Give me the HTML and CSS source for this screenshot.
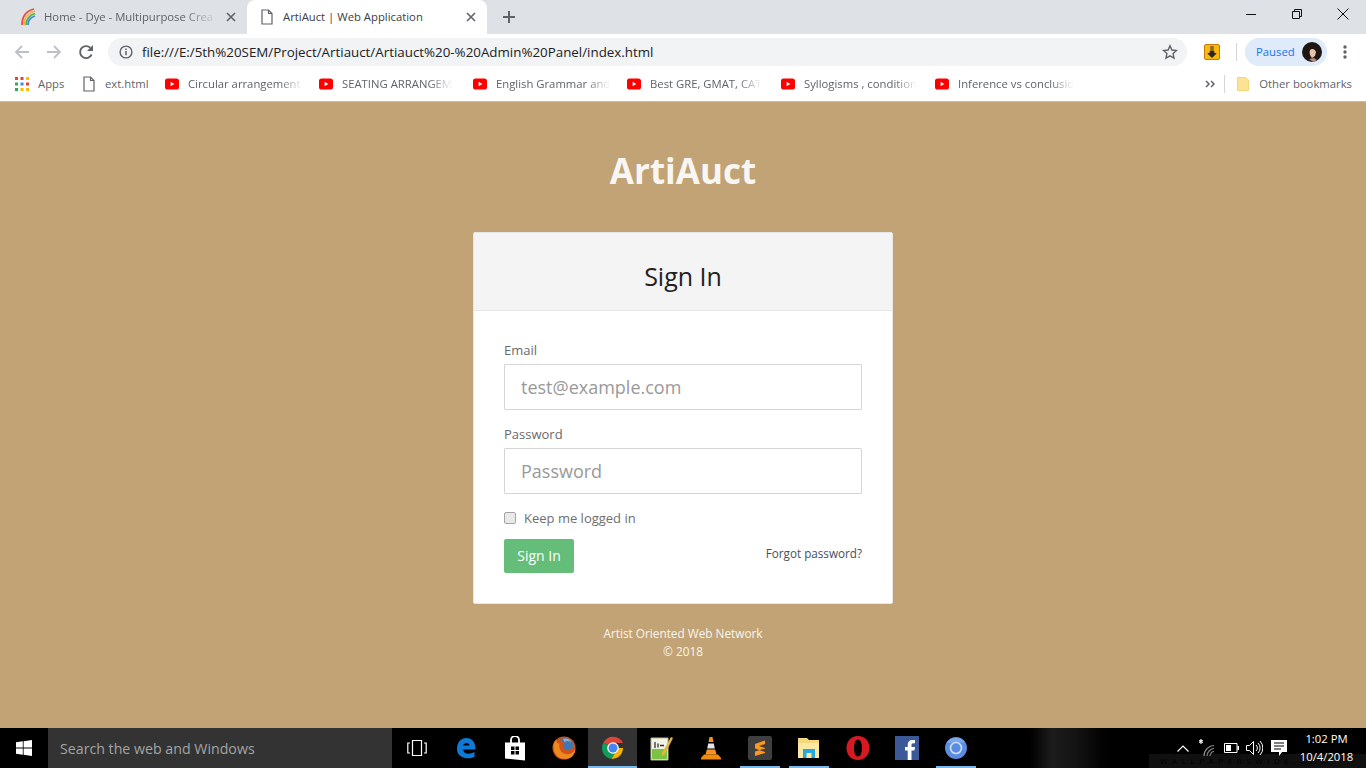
FILE: index.html
```html
<!DOCTYPE html>
<html lang="en">
<head>
<meta charset="utf-8">
<title>ArtiAuct | Web Application</title>
<link rel="stylesheet" href="styles.css">
</head>
<body>
<svg class="defs" width="0" height="0">
  <symbol id="yt" viewBox="0 0 14 12"><rect width="14" height="11" y=".5" rx="2.6" fill="#f00"/><path d="M5.6 3.7v4.6L9.4 6z" fill="#fff"/></symbol>
  <symbol id="doc" viewBox="0 0 12 16"><path d="M1 1h6.5L11 4.5V15H1zM7.5 1v3.5H11" fill="#fff" stroke="#5f6368" stroke-width="1.2"/></symbol>
  <symbol id="x" viewBox="0 0 10 10"><path d="M1 1l8 8M9 1l-8 8" stroke="#5f6368" stroke-width="1.6" fill="none"/></symbol>
</svg>
<header class="chrome">
  <div class="tabstrip">
    <div class="tab">
      <svg class="favicon" width="16" height="18" viewBox="0 0 16 18" fill="none" stroke-width="1.7"><path d="M2 17C2 9 6 3 14 1" stroke="#e8483b"/><path d="M4 17C4 10 8 5 15 3" stroke="#f4b23c"/><path d="M6 17C6 12 9 7 15 5.500" stroke="#4caf50"/><path d="M8 17C8 13 10 9.500 15 8" stroke="#3f8ad8"/></svg>
      <span class="tab-title fade">Home - Dye - Multipurpose Crea</span>
      <svg class="tab-x" width="10" height="10"><use href="#x"/></svg>
    </div>
    <div class="tab active">
      <svg class="doc-ic" width="12" height="16"><use href="#doc"/></svg>
      <span class="tab-title">ArtiAuct | Web Application</span>
      <svg class="tab-x" width="10" height="10"><use href="#x"/></svg>
    </div>
    <svg class="newtab" width="14" height="14" viewBox="0 0 14 14"><path d="M7 1v12M1 7h12" stroke="#5f6368" stroke-width="2"/></svg>
    <div class="winctl">
      <span class="winbtn"><svg width="12" height="12" viewBox="0 0 12 12"><path d="M1 6.500h10" stroke="#111"/></svg></span>
      <span class="winbtn"><svg width="12" height="12" viewBox="0 0 12 12" fill="none" stroke="#111"><path d="M1.500 3.500h7v7h-7zM3.500 3.500v-2h7v7h-2"/></svg></span>
      <span class="winbtn"><svg width="12" height="12" viewBox="0 0 12 12"><path d="M.5.500l11 11M11.500.500l-11 11" stroke="#111"/></svg></span>
    </div>
  </div>
  <div class="toolbar">
    <svg class="nav" width="16" height="16" viewBox="0 0 16 16" fill="none" stroke="#bdc1c6" stroke-width="1.8"><path d="M15 8H2M8 2L2 8l6 6"/></svg>
    <svg class="nav" width="16" height="16" viewBox="0 0 16 16" fill="none" stroke="#bdc1c6" stroke-width="1.8"><path d="M1 8h13M8 2l6 6-6 6"/></svg>
    <svg class="nav" width="16" height="16" viewBox="0 0 16 16" fill="none"><path d="M13.600 10.500A6 6 0 1 1 12.300 3.800" stroke="#5f6368" stroke-width="1.900"/><path d="M15 1v6H9z" fill="#5f6368"/></svg>
    <div class="omnibox">
      <svg width="14" height="14" viewBox="0 0 14 14" fill="none"><circle cx="7" cy="7" r="5.900" stroke="#5f6368" stroke-width="1.400"/><path d="M7 6v4.200M7 3.600v1.400" stroke="#5f6368" stroke-width="1.500"/></svg>
      <span class="url">file:///E:/5th%20SEM/Project/Artiauct/Artiauct%20-%20Admin%20Panel/index.html</span>
      <svg class="star" width="16" height="16" viewBox="0 0 16 16"><path d="M8 1.800l1.900 4.200 4.600.500-3.400 3.100.9 4.500L8 11.800l-4 2.300.9-4.500L1.500 6.500 6.100 6z" fill="none" stroke="#5f6368" stroke-width="1.400"/></svg>
    </div>
    <svg class="ext" width="16" height="16" viewBox="0 0 16 16"><rect x=".5" y=".5" width="15" height="15" rx="1.500" fill="#fbb80f" stroke="#c77a08"/><path d="M6.200 3h3.600M6.200 5h3.600M6.200 7h3.600V9.500H12L8 13.500 4 9.500h2.200z" fill="#262626" stroke="#262626"/></svg>
    <span class="vsep"></span>
    <div class="paused">
      <span>Paused</span>
      <svg width="20" height="20" viewBox="0 0 20 20"><circle cx="10" cy="10" r="10" fill="#1d1613"/><path d="M8 8c2-2 5-1 6 2l-1 4-3 2c-2-2-3-5-2-8z" fill="#e8c3ac"/><path d="M7 17l5-1 3 2-4 2z" fill="#b78a75"/></svg>
    </div>
    <svg class="menu" width="4" height="16" viewBox="0 0 4 16"><circle cx="2" cy="3" r="1.700" fill="#5f6368"/><circle cx="2" cy="8" r="1.700" fill="#5f6368"/><circle cx="2" cy="13" r="1.700" fill="#5f6368"/></svg>
  </div>
  <div class="bookmarks">
    <div class="bm bm-apps">
      <svg width="14" height="14" viewBox="0 0 14 14">
        <g fill="#ea4335"><rect x="0" y="0" width="3" height="3"/><rect x="5.500" y="0" width="3" height="3"/></g><rect x="11" y="0" width="3" height="3" fill="#fbbc05"/>
        <rect x="0" y="5.500" width="3" height="3" fill="#34a853"/><rect x="5.500" y="5.500" width="3" height="3" fill="#4285f4"/><rect x="11" y="5.500" width="3" height="3" fill="#ea4335"/>
        <rect x="0" y="11" width="3" height="3" fill="#34a853"/><rect x="5.500" y="11" width="3" height="3" fill="#fbbc05"/><rect x="11" y="11" width="3" height="3" fill="#fbbc05"/>
      </svg>
      <span>Apps</span>
    </div>
    <div class="bm bm-ext"><svg width="12" height="16"><use href="#doc"/></svg><span>ext.html</span></div>
    <div class="bm bm-yt"><svg width="14" height="12"><use href="#yt"/></svg><span class="fade">Circular arrangement,</span></div>
    <div class="bm bm-yt"><svg width="14" height="12"><use href="#yt"/></svg><span class="fade">SEATING ARRANGEM</span></div>
    <div class="bm bm-yt"><svg width="14" height="12"><use href="#yt"/></svg><span class="fade">English Grammar and</span></div>
    <div class="bm bm-yt"><svg width="14" height="12"><use href="#yt"/></svg><span class="fade">Best GRE, GMAT, CAT</span></div>
    <div class="bm bm-yt"><svg width="14" height="12"><use href="#yt"/></svg><span class="fade">Syllogisms , condition</span></div>
    <div class="bm bm-yt"><svg width="14" height="12"><use href="#yt"/></svg><span class="fade">Inference vs conclusio</span></div>
    <div class="bm-end">
      <svg width="10" height="8" viewBox="0 0 10 8" fill="none" stroke="#5f6368" stroke-width="1.500"><path d="M1 1l3 3-3 3M6 1l3 3-3 3"/></svg>
      <span class="vsep short"></span>
      <svg width="12" height="14" viewBox="0 0 12 14"><path d="M.5.500h8L11.500 3v10.500H.5z" fill="#fde293" stroke="#f4d47a"/></svg>
      <span>Other bookmarks</span>
    </div>
  </div>
</header>

<main class="page">
  <h1 class="brand">ArtiAuct</h1>
  <form class="card">
    <div class="card-head"><h2>Sign In</h2></div>
    <div class="card-body">
      <label class="field-label" for="email">Email</label>
      <input class="field" id="email" type="text" placeholder="test@example.com">
      <label class="field-label second" for="pass">Password</label>
      <input class="field" id="pass" type="password" placeholder="Password">
      <label class="keep"><span class="check"></span>Keep me logged in</label>
      <div class="actions">
        <span class="btn">Sign In</span>
        <span class="forgot">Forgot password?</span>
      </div>
    </div>
  </form>
  <p class="foot">Artist Oriented Web Network<br>© 2018</p>
</main>

<footer class="taskbar">
  <div class="start"><svg width="16" height="16" viewBox="0 0 16 16" fill="#fff"><path d="M0 2.300l6.800-1v6.300H0zM7.600 1.200L16 0v7.600H7.600zM0 8.400h6.800v6.300l-6.800-1zM7.600 8.400H16V16l-8.400-1.200z"/></svg></div>
  <div class="search">Search the web and Windows</div>
  <div class="slots">
    <span class="slot"><svg width="20" height="18" viewBox="0 0 20 18" fill="none" stroke="#fff" stroke-width="1.200"><path d="M5.500 1.500h9v15h-9zM3 4H.8v10H3M17 4h2.200v10H17"/></svg></span>
    <span class="slot"><svg width="20" height="22" viewBox="0 0 20 22"><path d="M1 12C1 5 5 1 10.500 1 16 1 19.500 5 19.500 12.500H7C7.500 17 13 18 18.500 15v5c-7 3-17.500 1-17.500-8zM7 8.500h6.500C13.500 5 8 5 7 8.500z" fill="#0c7ad6"/></svg></span>
    <span class="slot"><svg width="20" height="25" viewBox="0 0 20 25"><path d="M6 7V4a4 4 0 0 1 8 0v3" fill="none" stroke="#fff" stroke-width="1.800"/><path d="M0 6.500h20v18l-20-2z" fill="#fff"/><path d="M6 10.500h3.500v3.500H6zM10.500 10.500H14v3.500h-3.500zM6 15h3.500v3.500H6zM10.500 15H14v3.500h-3.500z" fill="#000"/></svg></span>
    <span class="slot"><svg width="24" height="24" viewBox="0 0 24 24"><circle cx="12" cy="12" r="11.500" fill="#d4511a"/><path d="M8 4c3-3 10-2 13 3 1 3 0 6-3 7-4 1-7-1-7-4 0-2 1-3 3-3-2-1-5-1-6-3z" fill="#3f78b5"/><path d="M11 3c3-1.500 7 0 8.500 3-2-1-5-1.500-7 0z" fill="#7fb4dd"/><path d="M2 7C0 14 4 23 13 23c6 0 10-4 10.500-10-2 4-6 6-10 5-5-1-7-6-6-11-2 1-3 0-3-3-1 0-2 2-2.500 3z" fill="#ee8a1d"/></svg></span>
    <span class="slot current"><svg width="24" height="24" viewBox="0 0 24 24"><path d="M12 12L2.500 6.500A11 11 0 0 1 22 7H12z" fill="#db4437"/><path d="M12 12l-9.500-5.500A11 11 0 0 0 10.500 23L15 15z" fill="#0f9d58"/><path d="M12 12h10a11 11 0 0 1-11.500 11L15 15z" fill="#f4b400"/><circle cx="12" cy="12" r="5.800" fill="#fff"/><circle cx="12" cy="12" r="4.500" fill="#4285f4"/></svg></span>
    <span class="slot"><svg width="24" height="26" viewBox="0 0 24 26"><path d="M1 3h17v22H1z" fill="#f2f2e6" stroke="#b6b69a"/><path d="M2 14h15v10H2z" fill="#7cc243"/><path d="M5 7v6M8 8.500v4M10 10.500h4" stroke="#333" stroke-width="1.300"/><path d="M12 18l9-16 2 1-8 16-3 2z" fill="#e5b63c"/></svg></span>
    <span class="slot"><svg width="22" height="24" viewBox="0 0 22 24"><path d="M9.500 1h3l1 5h-5z" fill="#f7931e"/><path d="M8.200 7.500h5.600l1 5H7.200z" fill="#e6e6e6"/><path d="M6.800 13.500h8.400l1.300 5h-11z" fill="#f7931e"/><path d="M1 22l3-3.500h14l3 3.500v1.500H1z" fill="#f28a12"/></svg></span>
    <span class="slot run"><svg width="24" height="24" viewBox="0 0 24 24"><rect width="24" height="24" rx="2" fill="#3f3f3f"/><path d="M17 4.500L7 8v4.500l10 3.500v-4L11 10l6-2zM7 15.500l10-3v4.500l-10 3z" fill="#fd971f"/></svg></span>
    <span class="slot run"><svg width="22" height="22" viewBox="0 0 22 22"><path d="M0 1h9l2 2h10v17H0z" fill="#f5d77d"/><path d="M0 6h21v15H0z" fill="#fbe6a2"/><path d="M5 12h12v9h-3.500v-5h-5v5H5z" fill="#23a9e0"/></svg></span>
    <span class="slot"><svg width="24" height="26" viewBox="0 0 24 26"><path fill-rule="evenodd" d="M12 1c7 0 11.500 5.500 11.500 12S19 25 12 25 .5 19.500.5 13 5 1 12 1zm0 3.500C9.500 4.500 8 8 8 13s1.500 8.500 4 8.500 4-3.500 4-8.500-1.500-8.500-4-8.500z" fill="#d81921"/></svg></span>
    <span class="slot"><svg width="24" height="24" viewBox="0 0 24 24"><rect width="24" height="24" fill="#3b5998"/><path d="M16.500 24v-9.500h3l.5-3.500h-3.500V9c0-1 .4-1.700 1.800-1.700H20V4.100C19.500 4 18.500 4 17.500 4c-3 0-4.800 1.800-4.800 4.700V11H10v3.500h2.700V24z" fill="#fff"/></svg></span>
    <span class="slot run"><svg width="24" height="24" viewBox="0 0 24 24"><circle cx="12" cy="12" r="11" fill="#5a8de0"/><path d="M2.500 7L12 6.500h9A11 11 0 0 0 2.500 7z" fill="#7ea7ea"/><circle cx="12" cy="12" r="5.500" fill="#5a8de0" stroke="#cfe0fb" stroke-width="1.600"/></svg></span>
  </div>
  <div class="tray">
    <svg class="t-caret" width="12" height="7" viewBox="0 0 12 7" fill="none" stroke="#fff" stroke-width="1.200"><path d="M.5 6.500L6 1l5.500 5.500"/></svg>
    <svg class="t-wifi" width="16" height="18" viewBox="0 0 16 18" fill="none" stroke="#8a8a8a" stroke-width="1.100"><path d="M15 6.500C10 6.500 5 11 5 17M15 9.500C12 9.500 8 13 8 17M15 12.500C13 12.500 11 14.500 11 17"/><path d="M2 0v5M0 1.500l4 2M4 1.500l-4 2" stroke="#fff"/></svg>
    <svg class="t-batt" width="15" height="10" viewBox="0 0 15 10"><path d="M.5.500h12.500v9H.5z" fill="none" stroke="#fff"/><rect x="2" y="2" width="5" height="6" fill="#fff"/><rect x="13.500" y="3" width="1.500" height="4" fill="#fff"/></svg>
    <svg class="t-vol" width="17" height="16" viewBox="0 0 17 16" fill="none" stroke="#fff"><path d="M.5 5.500h3l4-4v13l-4-4h-3z"/><path d="M10 5a4 4 0 0 1 0 6M12 3a7 7 0 0 1 0 10M14 1a10 10 0 0 1 0 14"/></svg>
    <svg class="t-note" width="16" height="16" viewBox="0 0 16 16"><path d="M0 0h16v12h-5l-3 4v-4H0z" fill="#fff"/><path d="M3 3h10M3 6h10M3 9h7" stroke="#000"/></svg>
    <div class="clock"><span>1:02 PM</span><span>10/4/2018</span></div>
  </div>
  <span class="wall-label">WALLPAPERSWIDE.COM</span>
</footer>
</body>
</html>
```

FILE: styles.css
```css
* { box-sizing: border-box; }
html, body { margin: 0; height: 100%; overflow: hidden; }
body { display: flex; flex-direction: column; height: 768px; font-family: "Open Sans", "Liberation Sans", sans-serif; background: #c1a375; }
.defs { display: block; height: 0; }
svg { display: block; flex: none; }

.chrome { flex: none; background: #fff; font-family: "Open Sans", sans-serif; }
.tabstrip { display: flex; align-items: center; height: 34px; background: #dee1e6; padding-left: 7px; }
.tab { display: flex; align-items: center; width: 240px; height: 34px; padding: 0 11px 0 13px; font-size: 11.3px; color: #5f6368; border-radius: 8px 8px 0 0; }
.tab.active { background: #fff; color: #3c4043; padding-left: 14px; }
.favicon { margin-right: 8px; }
.doc-ic { margin-right: 10px; }
.tab-title { flex: 1; margin-bottom: 2px; white-space: nowrap; }
.tab-x { margin-left: 8px; }
.newtab { margin-left: 15px; }
.winctl { display: flex; margin-left: auto; height: 34px; }
.winbtn { display: flex; align-items: center; justify-content: center; width: 46px; padding-bottom: 6px; }
.fade { white-space: nowrap; -webkit-mask-image: linear-gradient(to right, #000 80%, transparent); mask-image: linear-gradient(to right, #000 80%, transparent); }
.tab-title.fade { flex: none; width: 174px; }

.toolbar { display: flex; align-items: center; height: 34px; padding: 2px 19px 0 14px; }
.nav { margin-right: 16px; }
.omnibox { display: flex; align-items: center; width: 1079px; height: 28px; margin-left: -2px; padding: 0 9px 0 11px; background: #f1f3f4; border-radius: 14px; }
.url { flex: 1; margin-left: 9px; font-size: 13.35px; color: #202124; white-space: nowrap; }
.ext { margin-left: 17px; }
.vsep { display: block; width: 1px; height: 18px; margin-left: 16px; background: #d3d5d8; }
.paused { display: flex; align-items: center; justify-content: space-between; width: 82px; height: 28px; margin-left: 8px; padding: 0 5px 0 11px; background: #dfeafb; border-radius: 14px; font-size: 11.3px; color: #1a73e8; }
.paused span { margin-bottom: 2px; }
.menu { margin-left: 16px; }

.bookmarks { display: flex; align-items: center; height: 34px; padding: 0 14px 2px 15px; border-bottom: 1px solid #bdbdbd; font-size: 11.3px; color: #5f6368; }
.bm { display: flex; align-items: center; flex: none; }
.bm span { display: block; }
.bm-apps { width: 68px; }
.bm-apps span { margin-left: 9px; }
.bm-ext { width: 82px; }
.bm-ext span { margin-left: 10px; }
.bm-yt { width: 154px; }
.bm-yt span { margin-left: 9px; }
.bm-end { display: flex; align-items: center; margin-left: auto; }
.bm-end .short { margin: 0 12px 0 9px; }
.bm-end span:last-child { margin-left: 10px; }

.page { flex: 1; display: flex; flex-direction: column; align-items: center; background: #c1a375; }
.brand { margin: 46px 0 38px; font-size: 35px; line-height: 46px; font-weight: 700; color: #f8f6f3; }
.card { width: 420px; background: #fff; border: 1px solid #e6e6e6; border-radius: 2px; }
.card-head { height: 78px; padding-top: 8px; display: flex; align-items: center; justify-content: center; background: #f4f4f4; border-bottom: 1px solid #e6e6e6; }
.card-head h2 { margin: 0; font-size: 25px; font-weight: 400; color: #222; }
.card-body { display: flex; flex-direction: column; padding: 30px 30px 30px; }
.field-label { font-size: 13px; line-height: 18px; color: #6b6b6b; margin-bottom: 5px; }
.field-label.second { margin-top: 15px; }
.field { width: 358px; height: 46px; padding: 0 16px; border: 1px solid #d5d5d5; border-radius: 1px; background: #fff; font: 18px "Open Sans", sans-serif; }
.field::placeholder { color: #999; opacity: 1; }
.keep { display: flex; align-items: center; margin-top: 15px; font-size: 13px; line-height: 18px; color: #6f6f6f; }
.check { width: 12px; height: 12px; margin-right: 8px; background: #e9e9e9; border: 1px solid #a5a5a5; border-radius: 2px; }
.actions { display: flex; align-items: center; justify-content: space-between; margin-top: 12px; }
.btn { display: flex; align-items: center; justify-content: center; width: 70px; height: 34px; padding-bottom: 2px; background: #64bd79; border-radius: 2px; color: #fff; font-size: 14px; font-weight: 500; }
.forgot { font-size: 11.7px; color: #46505e; margin-bottom: 6px; }
.foot { margin: 20px 0 0; text-align: center; font-size: 11.8px; line-height: 18px; color: #fbf6ee; }

.taskbar { position: relative; flex: none; display: flex; height: 40px; background: linear-gradient(to right, #000 1030px, #1c1c1c 1052px, #141414 1075px, #050505 1098px, #000 1110px); color: #fff; }
.start { display: flex; align-items: center; justify-content: center; width: 48px; }
.search { display: flex; align-items: center; width: 344px; padding-left: 12px; background: #333; color: #a3a3a3; font-size: 14.2px; }
.slots { display: flex; }
.slot { display: flex; align-items: center; justify-content: center; width: 49px; height: 40px; }
.slot.current { background: #333 linear-gradient(#76b9ed, #76b9ed) no-repeat bottom / 100% 2px; }
.slot.run { background: linear-gradient(#76b9ed, #76b9ed) no-repeat bottom / 40px 2px; }
.tray { position: relative; z-index: 1; display: flex; align-items: center; margin-left: auto; padding-right: 14px; }
.t-caret { margin-right: 10px; }
.t-wifi { margin-right: 9px; }
.t-batt { margin-right: 7px; }
.t-vol { margin-right: 8px; }
.t-note { margin-right: 14px; }
.clock { display: flex; flex-direction: column; align-items: center; width: 51px; font-size: 11.3px; line-height: 18px; white-space: nowrap; }
.wall-label { position: absolute; right: 0; bottom: 0; width: 217px; height: 14px; padding-left: 11px; background: #101010; color: #000; font-size: 8px; line-height: 14px; letter-spacing: 4.6px; white-space: nowrap; }
```
